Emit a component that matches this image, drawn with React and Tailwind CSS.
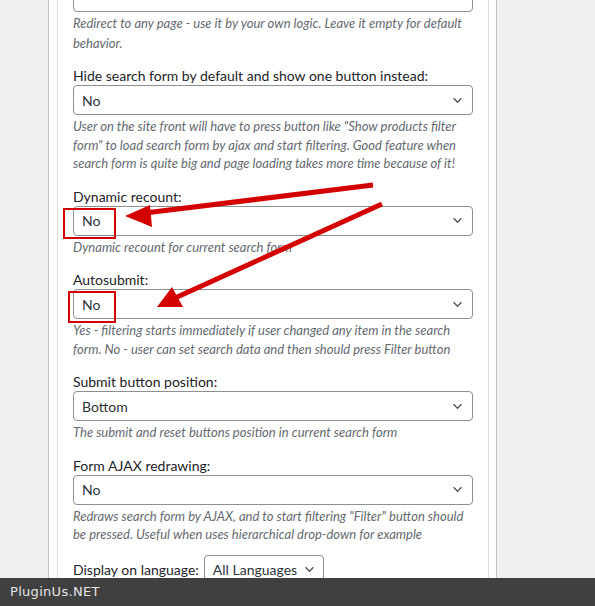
import React from 'react';

const Chevron = ({ className = '' }) => (
  <svg viewBox="0 0 12 8" className={className} fill="none" stroke="currentColor" strokeWidth="1.6">
    <path d="M1.5 1.5 L6 6 L10.5 1.5" />
  </svg>
);

const Select = ({ value }) => (
  <div className="flex h-[30px] items-center justify-between rounded-[4px] border border-[#8c8f94] bg-white pl-[8px] pr-[9px] text-[14px] text-[#2c3338]">
    <span>{value}</span>
    <Chevron className="h-[7px] w-[11px] text-[#50575e]" />
  </div>
);

const Field = ({ label, value, desc, className = '' }) => (
  <div className={className}>
    <div className="text-[14px] leading-[19px] text-[#1d2327]">{label}</div>
    <Select value={value} />
    <p className="mt-[2px] text-[13px] italic leading-[18.5px] text-[#646970]">{desc}</p>
  </div>
);

const fields = [
  {
    label: 'Hide search form by default and show one button instead:',
    value: 'No',
    desc: 'User on the site front will have to press button like "Show products filter form" to load search form by ajax and start filtering. Good feature when search form is quite big and page loading takes more time because of it!'
  },
  { label: 'Dynamic recount:', value: 'No', desc: 'Dynamic recount for current search form' },
  {
    label: 'Autosubmit:',
    value: 'No',
    desc: 'Yes - filtering starts immediately if user changed any item in the search form. No - user can set search data and then should press Filter button'
  },
  { label: 'Submit button position:', value: 'Bottom', desc: 'The submit and reset buttons position in current search form' },
  {
    label: 'Form AJAX redrawing:',
    value: 'No',
    desc: 'Redraws search form by AJAX, and to start filtering "Filter" button should be pressed. Useful when uses hierarchical drop-down for example'
  }
];

export default function App() {
  return (
    <div className="relative h-[606px] w-[595px] overflow-hidden bg-[#f0f0f0] font-['Lato',sans-serif]">
      <div className="ml-[48px] h-full w-[449px] border-x border-[#c3c4c7] bg-white pl-[8px] pr-[7px]">
        <div className="h-full border-x border-[#dcdcde] px-[15px]">
          <div className="-mt-[18px] h-[30px] rounded-[4px] border border-[#8c8f94]" />
          <p className="mt-[1px] text-[13px] italic leading-[20px] text-[#646970]">
            Redirect to any page - use it by your own logic. Leave it empty for default behavior.
          </p>
          {fields.map((f, i) => (
            <Field key={f.label} {...f} className={i === 0 ? 'mt-[13px]' : 'mt-[14px]'} />
          ))}
          <div className="mt-[11px] flex items-center gap-[5px] text-[14px] text-[#1d2327]">
            <span>Display on language:</span>
            <div className="flex h-[30px] w-[120px] items-center justify-between rounded-[4px] border border-[#8c8f94] pl-[8px] pr-[8px] text-[#2c3338]">
              <span>All Languages</span>
              <Chevron className="h-[7px] w-[11px] text-[#50575e]" />
            </div>
          </div>
        </div>
      </div>

      {/* annotations */}
      <div className="pointer-events-none absolute left-[63px] top-[208px] h-[31px] w-[53px] border-2 border-[#d40000]" />
      <div className="pointer-events-none absolute left-[68px] top-[291px] h-[32px] w-[48px] border-2 border-[#d40000]" />
      <svg className="pointer-events-none absolute left-0 top-0" width="595" height="606">
        <line x1="373" y1="185" x2="145" y2="213" stroke="#d40000" strokeWidth="5" />
        <polygon points="125,216 150,205 152,227" fill="#d40000" />
        <line x1="382" y1="204" x2="175" y2="298" stroke="#d40000" strokeWidth="5" />
        <polygon points="157,307 172,287 183,307" fill="#d40000" />
      </svg>

      <div className="absolute bottom-0 left-0 flex h-[28px] w-full items-center bg-[#404040] pl-[10px] font-['DejaVu_Sans',sans-serif] text-[13px] tracking-[0.3px] text-[#e6e6e6]">
        PluginUs.NET
      </div>
    </div>
  );
}
